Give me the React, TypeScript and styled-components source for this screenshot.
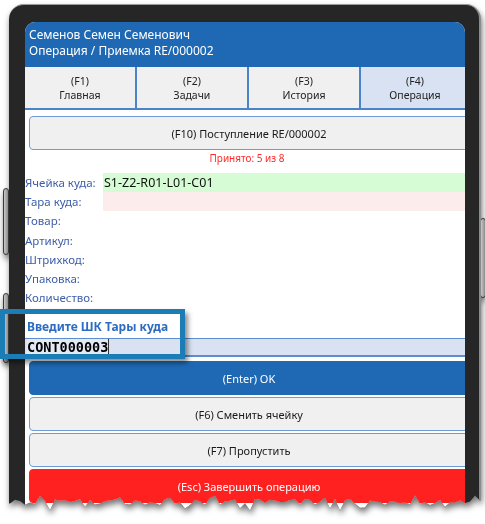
import styled, { createGlobalStyle } from "styled-components";

const GlobalStyle = createGlobalStyle`
  html, body {
    margin: 0;
    padding: 0;
    background: #ffffff;
    overflow: hidden;
  }
`;

const TABS = [
  { key: "F1", title: "Главная" },
  { key: "F2", title: "Задачи" },
  { key: "F3", title: "История" },
  { key: "F4", title: "Операция", active: true },
];

const FIELDS = [
  { label: "Ячейка куда:", value: "S1-Z2-R01-L01-C01", tone: "ok" },
  { label: "Тара куда:", value: "", tone: "need" },
  { label: "Товар:", value: "" },
  { label: "Артикул:", value: "" },
  { label: "Штрихкод:", value: "" },
  { label: "Упаковка:", value: "" },
  { label: "Количество:", value: "" },
];

// jagged bottom edge of the "torn" screenshot
const tornEdge = (() => {
  let seed = 7;
  const rnd = () => {
    seed = (seed * 9301 + 49297) % 233280;
    return seed / 233280;
  };
  const pts: string[] = ["0px 0px", "485px 0px"];
  for (let x = 485; x >= 0; x -= 5) {
    let y = 502 + (rnd() - 0.5) * 6;
    if (rnd() > 0.8) y -= 4;
    if (rnd() > 0.85) y += 7;
    pts.push(`${x}px ${y.toFixed(1)}px`);
  }
  return `polygon(${pts.join(", ")})`;
})();

const App = () => {
  return (
    <Page>
      <GlobalStyle />
      <Shadow>
        <Torn>
          <SideKey $side="left" $top={188} $height={67} />
          <SideKey $side="left" $top={293} $height={70} />
          <SideKey $side="right" $top={218} $height={80} />
          <Device>
            <Screen>
              <Content>
                <Header>
                  <HeaderLine>Семенов Семен Семенович</HeaderLine>
                  <HeaderLine>Операция / Приемка RE/000002</HeaderLine>
                </Header>
                <Tabs>
                  {TABS.map((tab) => (
                    <Tab key={tab.key} $active={!!tab.active}>
                      <span>({tab.key})</span>
                      <span>{tab.title}</span>
                    </Tab>
                  ))}
                </Tabs>
                <Body>
                  <ActionButton $variant="plain">(F10) Поступление RE/000002</ActionButton>
                  <Status>Принято: 5 из 8</Status>
                  <Fields>
                    {FIELDS.map((f) => (
                      <FieldRow key={f.label}>
                        <Label>{f.label}</Label>
                        <Value $tone={f.tone}>{f.value}</Value>
                      </FieldRow>
                    ))}
                  </Fields>
                  <Prompt>Введите ШК Тары куда</Prompt>
                  <Input>
                    <Typed>CONT000003</Typed>
                    <Caret />
                  </Input>
                  <Buttons>
                    <ActionButton $variant="primary">(Enter) OK</ActionButton>
                    <ActionButton $variant="plain">(F6) Сменить ячейку</ActionButton>
                    <ActionButton $variant="plain">(F7) Пропустить</ActionButton>
                    <ActionButton $variant="danger">(Esc) Завершить операцию</ActionButton>
                  </Buttons>
                </Body>
              </Content>
            </Screen>
          </Device>
        </Torn>
      </Shadow>
      <Callout />
    </Page>
  );
};

export default App;

const Page = styled.div`
  position: relative;
  width: 485px;
  height: 524px;
  background: #ffffff;
  font-family: "Noto Sans", "Open Sans", sans-serif;
`;

const Shadow = styled.div`
  filter: drop-shadow(1px 4px 3px rgba(0, 0, 0, 0.55));
`;

const Torn = styled.div`
  position: relative;
  height: 524px;
  padding: 4px 0 0 9px;
  box-sizing: border-box;
  clip-path: ${tornEdge};
`;

const SideKey = styled.div<{ $side: "left" | "right"; $top: number; $height: number }>`
  position: absolute;
  top: ${(p) => p.$top}px;
  ${(p) => (p.$side === "left" ? "left: 3px;" : "left: 480px;")}
  width: 6px;
  height: ${(p) => p.$height}px;
  border-radius: 3px;
  background: linear-gradient(90deg, #c8c8c8, #8c8c8c);
  border: 1px solid #3a3a3a;
  box-sizing: border-box;
`;

const Device = styled.div`
  position: relative;
  width: 472px;
  height: 520px;
  box-sizing: border-box;
  padding: 17px 15px 0 16px;
  background: #262626;
  border-radius: 15px 15px 0 0;
  border-top: 1px solid #9c9c9c;
  border-right: 2px solid #8c8c8c;
`;

const Screen = styled.div`
  width: 440px;
  height: 100%;
  background: #ffffff;
  border-radius: 10px 10px 0 0;
  overflow: hidden;
`;

const Content = styled.div`
  width: 452px;
  display: flex;
  flex-direction: column;
`;

const Header = styled.div`
  height: 45px;
  box-sizing: border-box;
  padding: 5px 4px 0;
  background: #1f69b4;
  color: #ffffff;
  font-size: 12px;
`;

const HeaderLine = styled.div`
  height: 16px;
  line-height: 16px;
  white-space: nowrap;
`;

const Tabs = styled.div`
  display: grid;
  grid-template-columns: 110px 112px 112px 1fr;
  border-bottom: 2px solid #4a84c8;
`;

const Tab = styled.div<{ $active: boolean }>`
  height: 41px;
  box-sizing: border-box;
  display: flex;
  flex-direction: column;
  align-items: center;
  justify-content: center;
  font-size: 10.5px;
  line-height: 14px;
  color: #222222;
  background: ${(p) => (p.$active ? "#d9e2f2" : "#f0f0f0")};

  & + & {
    border-left: 2px solid #4a84c8;
  }

  &:last-child {
    padding-right: 8px;
  }
`;

const Body = styled.div`
  display: flex;
  flex-direction: column;
  padding-top: 6px;
`;

const ActionButton = styled.div<{ $variant: "plain" | "primary" | "danger" }>`
  margin: 0 4px;
  width: 440px;
  height: 34px;
  box-sizing: border-box;
  display: flex;
  align-items: center;
  justify-content: center;
  border-radius: 4px;
  font-size: 11px;
  border: 1px solid
    ${(p) => (p.$variant === "plain" ? "#6f9bd4" : p.$variant === "primary" ? "#1f69b4" : "#ff2020")};
  background: ${(p) => (p.$variant === "plain" ? "#f0f0f0" : p.$variant === "primary" ? "#1f69b4" : "#ff2020")};
  color: ${(p) => (p.$variant === "plain" ? "#1a1a1a" : "#ffffff")};
`;

const Status = styled.div`
  margin-top: 1px;
  width: 444px;
  text-align: center;
  font-size: 10px;
  line-height: 14px;
  color: #ff2a2a;
`;

const Fields = styled.div`
  margin-top: 8px;
  display: flex;
  flex-direction: column;
`;

const FieldRow = styled.div`
  display: flex;
  align-items: stretch;
  height: 19.2px;
`;

const Label = styled.div`
  width: 78px;
  flex: none;
  font-size: 11.5px;
  line-height: 19px;
  color: #3d5ea8;
  white-space: nowrap;
`;

const Value = styled.div<{ $tone?: string }>`
  flex: 1;
  padding-left: 1px;
  font-size: 12.5px;
  line-height: 19px;
  color: #111111;
  background: ${(p) => (p.$tone === "ok" ? "#d5fcd5" : p.$tone === "need" ? "#fdecec" : "transparent")};
`;

const Prompt = styled.div`
  margin-top: 12px;
  padding-left: 2px;
  font-size: 12px;
  line-height: 16px;
  font-weight: 700;
  color: #2d6cc0;
`;

const Input = styled.div`
  margin-top: 3px;
  height: 19px;
  box-sizing: border-box;
  display: flex;
  align-items: center;
  padding-left: 2px;
  background: #d9e2f2;
  border-top: 1px solid #5c8fd0;
  border-bottom: 2px solid #5c8fd0;
`;

const Typed = styled.span`
  font-family: "DejaVu Sans Mono", "Liberation Mono", monospace;
  font-weight: 700;
  font-size: 13.5px;
  line-height: 16px;
  color: #000000;
  background: #e3e9f5;
`;

const Caret = styled.span`
  width: 1px;
  height: 16px;
  background: #333333;
`;

const Buttons = styled.div`
  margin-top: 4px;
  display: flex;
  flex-direction: column;
  gap: 2px;
`;

const Callout = styled.div`
  position: absolute;
  left: 0;
  top: 309px;
  width: 185px;
  height: 50px;
  box-sizing: border-box;
  border: 5px solid #1b7cb6;
  box-shadow: 3px 4px 5px rgba(0, 0, 0, 0.45);
`;
